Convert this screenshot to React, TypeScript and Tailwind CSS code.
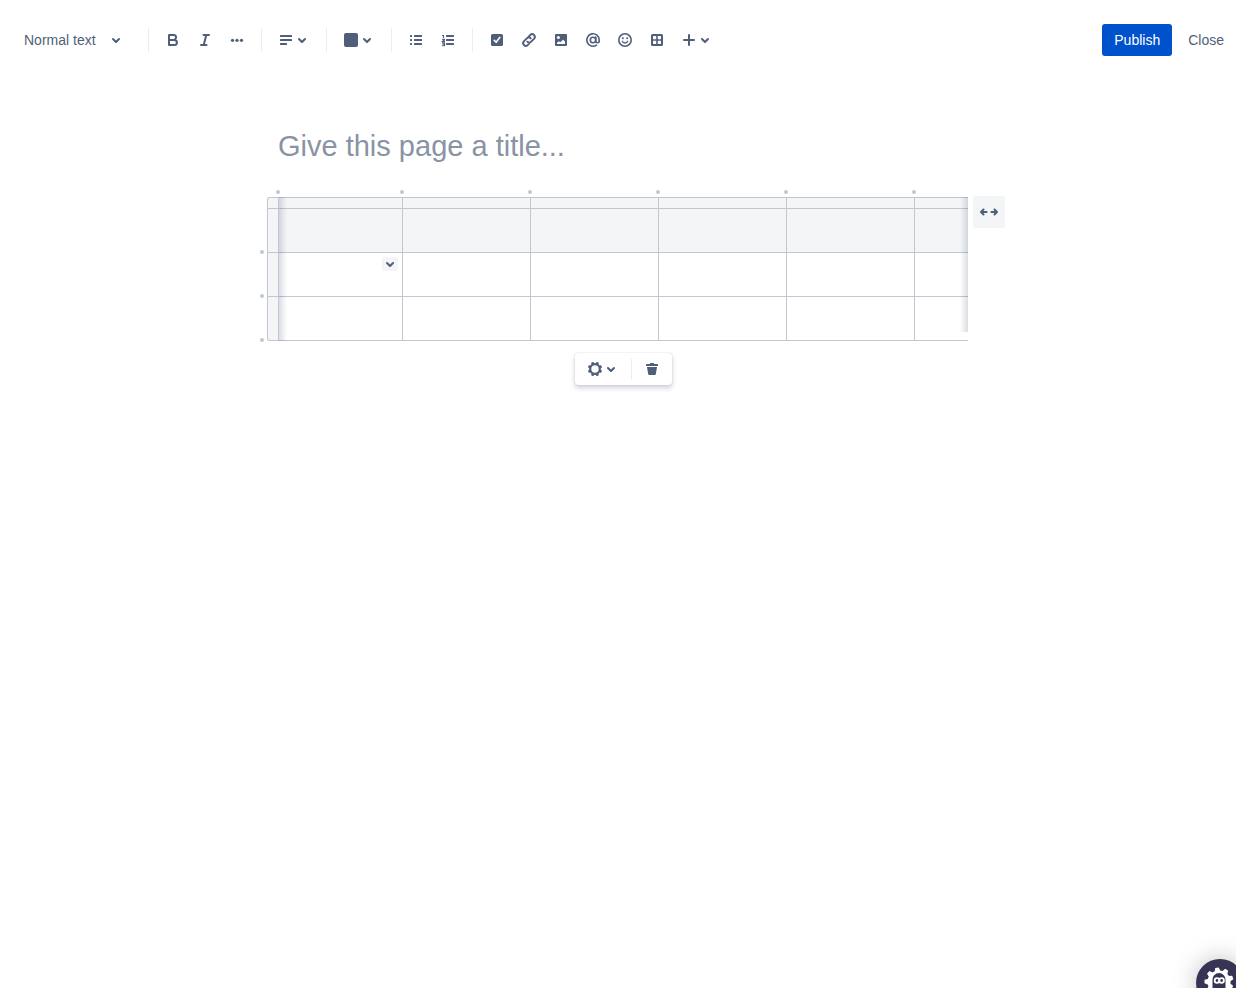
import type { ReactNode } from 'react';

function Icon({ children }: { children: ReactNode }) {
  return (
    <svg viewBox="0 0 24 24" className="size-6 shrink-0" fill="currentColor" aria-hidden="true">
      {children}
    </svg>
  );
}

const line = {
  fill: 'none',
  stroke: 'currentColor',
  strokeWidth: 2,
  strokeLinecap: 'round',
  strokeLinejoin: 'round',
} as const;

function Chevron() {
  return (
    <Icon>
      <path d="M8.292 10.293a1.009 1.009 0 0 0 0 1.419l2.939 2.965c.218.215.5.322.779.322s.556-.107.769-.322l2.93-2.955a1.01 1.01 0 0 0 0-1.419.987.987 0 0 0-1.406 0l-2.298 2.317-2.307-2.327a.99.99 0 0 0-1.406 0z" />
    </Icon>
  );
}

const icons = {
  bold: (
    <Icon>
      <path {...line} d="M8 7h4.6a2.4 2.4 0 0 1 0 4.9H8V7zM8 12h5.4a2.5 2.5 0 0 1 0 5H8v-5z" />
    </Icon>
  ),
  italic: (
    <Icon>
      <path {...line} d="M10.5 7H16M8 17h5.5M13.3 7l-2.6 10" />
    </Icon>
  ),
  more: (
    <Icon>
      <circle cx="7.5" cy="12.3" r="1.6" />
      <circle cx="12" cy="12.3" r="1.6" />
      <circle cx="16.5" cy="12.3" r="1.6" />
    </Icon>
  ),
  align: (
    <Icon>
      <rect x="6" y="7" width="12" height="2" rx="0.5" />
      <rect x="6" y="11" width="12" height="2" rx="0.5" />
      <rect x="6" y="15" width="7" height="2" rx="0.5" />
    </Icon>
  ),
  color: (
    <Icon>
      <rect x="5" y="5" width="14" height="14" rx="2" />
    </Icon>
  ),
  bullets: (
    <Icon>
      {[7, 11, 15].map((y) => (
        <g key={y}>
          <rect x="6" y={y} width="2" height="2" rx="0.5" />
          <rect x="10" y={y} width="8" height="2" rx="0.5" />
        </g>
      ))}
    </Icon>
  ),
  numbers: (
    <Icon>
      <rect x="10" y="7" width="8" height="2" rx="0.5" />
      <rect x="10" y="11" width="8" height="2" rx="0.5" />
      <rect x="10" y="15" width="8" height="2" rx="0.5" />
      <path
        fill="none"
        stroke="currentColor"
        strokeWidth="1.1"
        d="M6 7.5h1.5V10M6 11.2h2.5v.6l-2 1.6H9M6 14.9h2.5v2.8H6M6.5 16.3h2"
      />
    </Icon>
  ),
  task: (
    <Icon>
      <rect x="6" y="6" width="12" height="12" rx="1.5" />
      <path d="M9.2 12.3l1.9 2 3.8-5" fill="none" stroke="#fff" strokeWidth="1.6" strokeLinecap="round" strokeLinejoin="round" />
    </Icon>
  ),
  link: (
    <Icon>
      <path
        {...line}
        strokeWidth="1.9"
        d="M10.3 13.7a2.7 2.7 0 0 0 3.8 0l3.1-3.1a2.7 2.7 0 0 0-3.8-3.8l-1.6 1.6M13.7 10.3a2.7 2.7 0 0 0-3.8 0l-3.1 3.1a2.7 2.7 0 0 0 3.8 3.8l1.6-1.6"
      />
    </Icon>
  ),
  image: (
    <Icon>
      <rect x="6" y="6" width="12" height="12" rx="1" />
      <circle cx="9.4" cy="9.4" r="1.5" fill="#fff" />
      <path d="M8 16v-1.2l1.8-1.5 1.4 1 2.9-2.6 1.9 1.9V16z" fill="#fff" />
    </Icon>
  ),
  mention: (
    <Icon>
      <circle cx="12" cy="12" r="2.7" fill="none" stroke="currentColor" strokeWidth="1.6" />
      <path
        d="M14.8 9v4a1.7 1.7 0 0 0 3.4 0v-1a6.2 6.2 0 1 0-2.7 5.1"
        fill="none"
        stroke="currentColor"
        strokeWidth="1.6"
        strokeLinecap="round"
      />
    </Icon>
  ),
  emoji: (
    <Icon>
      <circle cx="12" cy="12" r="6.2" fill="none" stroke="currentColor" strokeWidth="1.6" />
      <circle cx="9.9" cy="10.2" r="1" />
      <circle cx="14.1" cy="10.2" r="1" />
      <path d="M9.3 13.3c.6 1.2 1.5 1.7 2.7 1.7s2.1-.5 2.7-1.7" fill="none" stroke="currentColor" strokeWidth="1.4" strokeLinecap="round" />
    </Icon>
  ),
  table: (
    <Icon>
      <path
        fillRule="evenodd"
        d="M7.5 6h9A1.5 1.5 0 0 1 18 7.5v9a1.5 1.5 0 0 1-1.5 1.5h-9A1.5 1.5 0 0 1 6 16.5v-9A1.5 1.5 0 0 1 7.5 6zM8 8v3.2h3.2V8zm4.8 0v3.2H16V8zM8 12.8V16h3.2v-3.2zm4.8 0V16H16v-3.2z"
      />
    </Icon>
  ),
  plus: (
    <Icon>
      <path {...line} d="M12 7v10M7 12h10" />
    </Icon>
  ),
  gear: (
    <Icon>
      <circle cx="12" cy="12" r="4.8" fill="none" stroke="currentColor" strokeWidth="2.2" />
      {[22.5, 67.5, 112.5, 157.5, 202.5, 247.5, 292.5, 337.5].map((a) => (
        <rect key={a} x="10.6" y="4.8" width="2.8" height="2.6" rx="0.8" transform={`rotate(${a} 12 12)`} />
      ))}
    </Icon>
  ),
  trash: (
    <Icon>
      <path d="M10 6.5a.5.5 0 0 1 .5-.5h3a.5.5 0 0 1 .5.5V7h3.500a.5.5 0 0 1 .5.5v1a.5.5 0 0 1-.5.5h-11a.5.5 0 0 1-.5-.5v-1a.5.5 0 0 1 .5-.5H10zM7 10h10l-1.200 7.200a1 1 0 0 1-1 .8H9.200a1 1 0 0 1-1-.8z" />
    </Icon>
  ),
  expand: (
    <Icon>
      <path {...line} d="M9.6 12H4.200M6.500 9.500L4 12l2.500 2.500M14.400 12h5.400M17.500 9.500L20 12l-2.500 2.500" />
    </Icon>
  ),
};

function Tool({ icon, label, menu = false }: { icon: keyof typeof icons; label: string; menu?: boolean }) {
  return (
    <button type="button" aria-label={label} className="flex h-8 items-center rounded-sm px-1 hover:bg-gray-100">
      {icons[icon]}
      {menu && (
        <span className="-ml-2 flex">
          <Chevron />
        </span>
      )}
    </button>
  );
}

function Separator() {
  return <span className="mx-2 h-6 w-px shrink-0 bg-[#ebecf0]" />;
}

function Toolbar() {
  return (
    <header className="flex h-20 items-center justify-between pl-5 text-sm text-[#505f79]">
      <div className="flex items-center">
        <button type="button" className="flex h-8 w-[120px] items-center px-1 text-left">
          <span className="w-20">Normal text</span>
          <Chevron />
        </button>
        <Separator />
        <Tool icon="bold" label="Bold" />
        <Tool icon="italic" label="Italic" />
        <Tool icon="more" label="More formatting" />
        <Separator />
        <Tool icon="align" label="Text alignment" menu />
        <Separator />
        <Tool icon="color" label="Text color" menu />
        <Separator />
        <Tool icon="bullets" label="Bullet list" />
        <Tool icon="numbers" label="Numbered list" />
        <Separator />
        <Tool icon="task" label="Action item" />
        <Tool icon="link" label="Link" />
        <Tool icon="image" label="Files and images" />
        <Tool icon="mention" label="Mention" />
        <Tool icon="emoji" label="Emoji" />
        <Tool icon="table" label="Table" />
        <Tool icon="plus" label="Insert" menu />
      </div>
      <div className="flex items-center gap-1">
        <button type="button" className="h-8 rounded-[3px] bg-[#0052cc] px-3 text-white">
          Publish
        </button>
        <button type="button" className="h-8 px-3">
          Close
        </button>
      </div>
    </header>
  );
}

const columns = [0, 1, 2, 3, 4, 5];
const rows = [0, 1, 2];

function EditorTable() {
  return (
    <div className="-mr-[47px] -ml-5 flex items-start gap-[5px]">
      <div className="relative min-w-0 flex-1 overflow-hidden pt-[9px] pb-1 pl-[9px]">
        <table className="w-[775px] table-fixed border-separate border-spacing-0">
          <colgroup>
            <col className="w-[11px]" />
            <col className="w-[124px]" />
            <col className="w-[128px]" />
            <col className="w-[128px]" />
            <col className="w-[128px]" />
            <col className="w-[128px]" />
            <col className="w-[128px]" />
          </colgroup>
          <thead>
            <tr className="h-[11px]">
              <td className="rounded-tl-[3px] border-t border-l border-[#c1c7d0] bg-[#f4f5f7] p-0" />
              {columns.map((c) => (
                <td key={c} className="relative border-t border-l border-[#c1c7d0] bg-[#f4f5f7] p-0">
                  <span className="absolute -top-2 -left-[3px] size-1 rounded-full bg-[#c1c7d0]" />
                </td>
              ))}
            </tr>
          </thead>
          <tbody>
            {rows.map((r) => (
              <tr key={r} className="group h-11 last:h-[45px]">
                <td className="relative border-t border-l border-[#c1c7d0] bg-[#f4f5f7] p-0 group-last:rounded-bl-[3px] group-last:border-b">
                  <span className="absolute -bottom-[2px] -left-2 size-1 rounded-full bg-[#c1c7d0]" />
                </td>
                {columns.map((c) => (
                  <td
                    key={c}
                    className="border-t border-l border-[#c1c7d0] p-0 align-top group-first:bg-[#f4f5f7] group-last:border-b"
                  >
                    {r === 1 && c === 0 && (
                      <div className="flex justify-end pt-1 pr-1">
                        <button
                          type="button"
                          aria-label="Cell options"
                          className="flex h-[14px] w-4 items-center justify-center rounded-[2px] bg-[#f4f5f7] text-[#505f79]"
                        >
                          <Chevron />
                        </button>
                      </div>
                    )}
                  </td>
                ))}
              </tr>
            ))}
          </tbody>
        </table>
        <span className="pointer-events-none absolute top-[9px] bottom-1 left-[21px] w-2 bg-linear-to-r from-[#091e4226] to-[#091e4200]" />
        <span className="pointer-events-none absolute top-[9px] right-0 bottom-[13px] w-2 bg-linear-to-l from-[#091e4226] to-[#091e4200]" />
      </div>
      <button
        type="button"
        aria-label="Go wide"
        className="mt-2 flex size-8 items-center justify-center rounded-[3px] bg-[#f4f5f7] text-[#505f79]"
      >
        {icons.expand}
      </button>
    </div>
  );
}

function HelpBadge() {
  return (
    <button
      type="button"
      aria-label="Help"
      className="fixed -right-2 -bottom-[19px] size-12 rounded-full bg-[#353454] shadow-[0_0_24px_rgba(0,0,0,0.25)]"
    >
      <svg viewBox="0 0 48 48" className="size-full" aria-hidden="true">
        <g fill="#fff">
          <circle cx="23" cy="23" r="11.5" />
          {[-8, 32, 72, 112, 152, 192, 232, 272, 312].map((a) => (
            <path key={a} d="M20 12.5l1.2-4h3.6l1.2 4z" transform={`rotate(${a} 23 23)`} />
          ))}
        </g>
        <path d="M16.5 32V20.500a6.500 6.500 0 0 1 13 0V32z" fill="#353454" />
        <g fill="none" stroke="#fff" strokeWidth="1.8">
          <circle cx="21" cy="21.500" r="2.300" />
          <circle cx="25.600" cy="21.500" r="2.300" />
        </g>
      </svg>
    </button>
  );
}

export default function App() {
  return (
    <div className="min-h-screen overflow-hidden bg-white font-['Liberation_Sans',Arial,sans-serif]">
      <Toolbar />
      <main className="mx-auto max-w-[680px] pt-[47px]">
        <input
          type="text"
          aria-label="Page title"
          placeholder="Give this page a title..."
          className="block h-10 w-full text-[29px] text-[#172b4d] outline-none placeholder:text-[#8993a4]"
        />
        <div className="mt-[21px]">
          <EditorTable />
        </div>
        <div className="mt-2 flex justify-center pl-[11px] text-[#505f79]">
          <div className="flex items-center rounded-[3px] bg-white px-1 shadow-[0_0_1px_rgba(9,30,66,0.31),0_3px_5px_rgba(9,30,66,0.2)]">
            <Tool icon="gear" label="Table options" menu />
            <span className="mx-1 h-5 w-px bg-[#ebecf0]" />
            <Tool icon="trash" label="Remove table" />
          </div>
        </div>
      </main>
      <HelpBadge />
    </div>
  );
}
